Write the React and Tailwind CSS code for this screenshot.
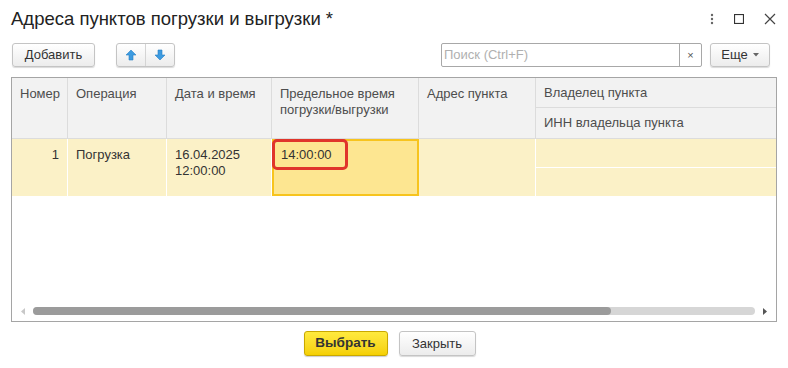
import React from 'react'

const font = { fontFamily: '"Liberation Sans", Arial, sans-serif' }

const ArrowUp = () => (
    <svg width="12" height="12" viewBox="0 0 12 12">
        <path d="M6 1 L11 6 L8 6 L8 11 L4 11 L4 6 L1 6 Z" fill="#3d9be0" stroke="#2a7fc4" strokeWidth="0.6" />
    </svg>
)

const ArrowDown = () => (
    <svg width="12" height="12" viewBox="0 0 12 12">
        <path d="M6 11 L11 6 L8 6 L8 1 L4 1 L4 6 L1 6 Z" fill="#3d9be0" stroke="#2a7fc4" strokeWidth="0.6" />
    </svg>
)

const btn = "h-[24px] border border-[#c4c4c4] rounded-[3px] bg-gradient-to-b from-white to-[#ececec] shadow-[0_1px_1px_rgba(0,0,0,0.15)] text-[13px] text-[#333] flex items-center justify-center"
const head = "bg-[#f2f2f2] text-[13px] text-[#4d4d4d] px-[8px] pt-[8px] leading-[16px] border-r border-[#dcdcdc]"
const cell = "bg-[#fbf1c7] text-[13px] text-[#333] px-[8px] pt-[8px] leading-[16px] border-r border-[#fff]"

export default function App() {
    return (
        <div style={font} className="w-[788px] h-[368px] bg-white relative overflow-hidden">
            {/* TITLE */}
            <div className="flex items-center justify-between pl-[11px] pr-[12px] pt-[6px] h-[32px]">
                <h1 className="text-[18.5px] text-[#222] leading-none">Адреса пунктов погрузки и выгрузки *</h1>
                <div className="flex items-center gap-[20px] text-[#555]">
                    <svg width="4" height="12" viewBox="0 0 4 12"><circle cx="2" cy="2" r="1.2" fill="#666" /><circle cx="2" cy="6" r="1.2" fill="#666" /><circle cx="2" cy="10" r="1.2" fill="#666" /></svg>
                    <svg width="10" height="10" viewBox="0 0 10 10"><rect x="0.5" y="0.5" width="9" height="9" fill="none" stroke="#333" strokeWidth="1.2" /></svg>
                    <svg width="12" height="12" viewBox="0 0 12 12"><path d="M1 1 L11 11 M11 1 L1 11" stroke="#444" strokeWidth="1.2" /></svg>
                </div>
            </div>

            {/* TOOLBAR */}
            <div className="flex items-center pl-[12px] pr-[18px] mt-[11px]">
                <button className={btn + " w-[83px]"}>Добавить</button>
                <div className={btn + " ml-[21px] w-[59px] !justify-start"}>
                    <div className="w-[29px] h-full flex items-center justify-center border-r border-[#d4d4d4]"><ArrowUp /></div>
                    <div className="w-[29px] h-full flex items-center justify-center"><ArrowDown /></div>
                </div>
                <div className="ml-auto flex h-[24px] w-[261px] border border-[#a8a8a8] rounded-[2px] bg-white">
                    <div className="flex-1 text-[13px] text-[#b0b0b0] pl-[2px] flex items-center">Поиск (Ctrl+F)</div>
                    <div className="w-[22px] border-l border-[#a8a8a8] flex items-center justify-center text-[11px] text-[#555]">×</div>
                </div>
                <button className={btn + " ml-[8px] w-[60px] gap-[5px]"}>
                    <span>Еще</span>
                    <svg width="6" height="4" viewBox="0 0 6 4"><path d="M0 0 L6 0 L3 3.5 Z" fill="#666" /></svg>
                </button>
            </div>

            {/* TABLE */}
            <div className="mx-[11px] mt-[10px] h-[245px] border border-[#a5a5a5] flex flex-col">
                <div className="flex h-[61px] border-b border-[#dcdcdc]">
                    <div className={head + " w-[56px] text-right"}>Номер</div>
                    <div className={head + " w-[99px]"}>Операция</div>
                    <div className={head + " w-[105px]"}>Дата и время</div>
                    <div className={head + " w-[147px]"}>Предельное время погрузки/выгрузки</div>
                    <div className={head + " w-[117px]"}>Адрес пункта</div>
                    <div className="flex-1 flex flex-col bg-[#f2f2f2] text-[13px] text-[#4d4d4d]">
                        <div className="h-[30px] px-[8px] flex items-center border-b border-[#dcdcdc]">Владелец пункта</div>
                        <div className="flex-1 px-[8px] flex items-center">ИНН владельца пункта</div>
                    </div>
                </div>
                <div className="flex h-[57px] relative">
                    <div className={cell + " w-[56px] text-right"}>1</div>
                    <div className={cell + " w-[99px]"}>Погрузка</div>
                    <div className={cell + " w-[105px]"}>16.04.2025<br />12:00:00</div>
                    <div className="w-[147px] bg-[#fde691] border-2 border-[#f7c41e] text-[13px] text-[#333] px-[7px] pt-[6px] leading-[16px]">14:00:00</div>
                    <div className={cell + " w-[117px]"}></div>
                    <div className="flex-1 flex flex-col bg-[#fbf1c7]">
                        <div className="h-[29px] border-b border-[#fff]"></div>
                        <div className="flex-1"></div>
                    </div>
                    {/* red highlight */}
                    <div className="absolute left-[260px] top-0 w-[76px] h-[31px] border-[3px] border-[#e0352b] rounded-[5px]"></div>
                </div>
                <div className="flex-1"></div>
                <div className="h-[20px] flex items-center px-[9px] gap-[8px]">
                    <svg width="4" height="7" viewBox="0 0 4 7"><path d="M4 0 L0 3.5 L4 7 Z" fill="#c8c8c8" /></svg>
                    <div className="flex-1 h-[8px] rounded-full bg-[#d6d6d6] flex">
                        <div className="w-[578px] h-full rounded-full bg-[#9b9b9b]"></div>
                    </div>
                    <svg width="4" height="7" viewBox="0 0 4 7"><path d="M0 0 L4 3.5 L0 7 Z" fill="#555" /></svg>
                </div>
            </div>

            {/* FOOTER */}
            <div className="flex justify-center gap-[11px] mt-[9px] pr-[9px]">
                <button className="h-[25px] w-[84px] border border-[#c9a800] rounded-[3px] bg-gradient-to-b from-[#ffea3d] to-[#f5d000] shadow-[0_1px_1px_rgba(0,0,0,0.2)] text-[13.5px] font-bold text-[#333]">Выбрать</button>
                <button className={btn + " !h-[25px] w-[77px]"}>Закрыть</button>
            </div>
        </div>
    )
}
